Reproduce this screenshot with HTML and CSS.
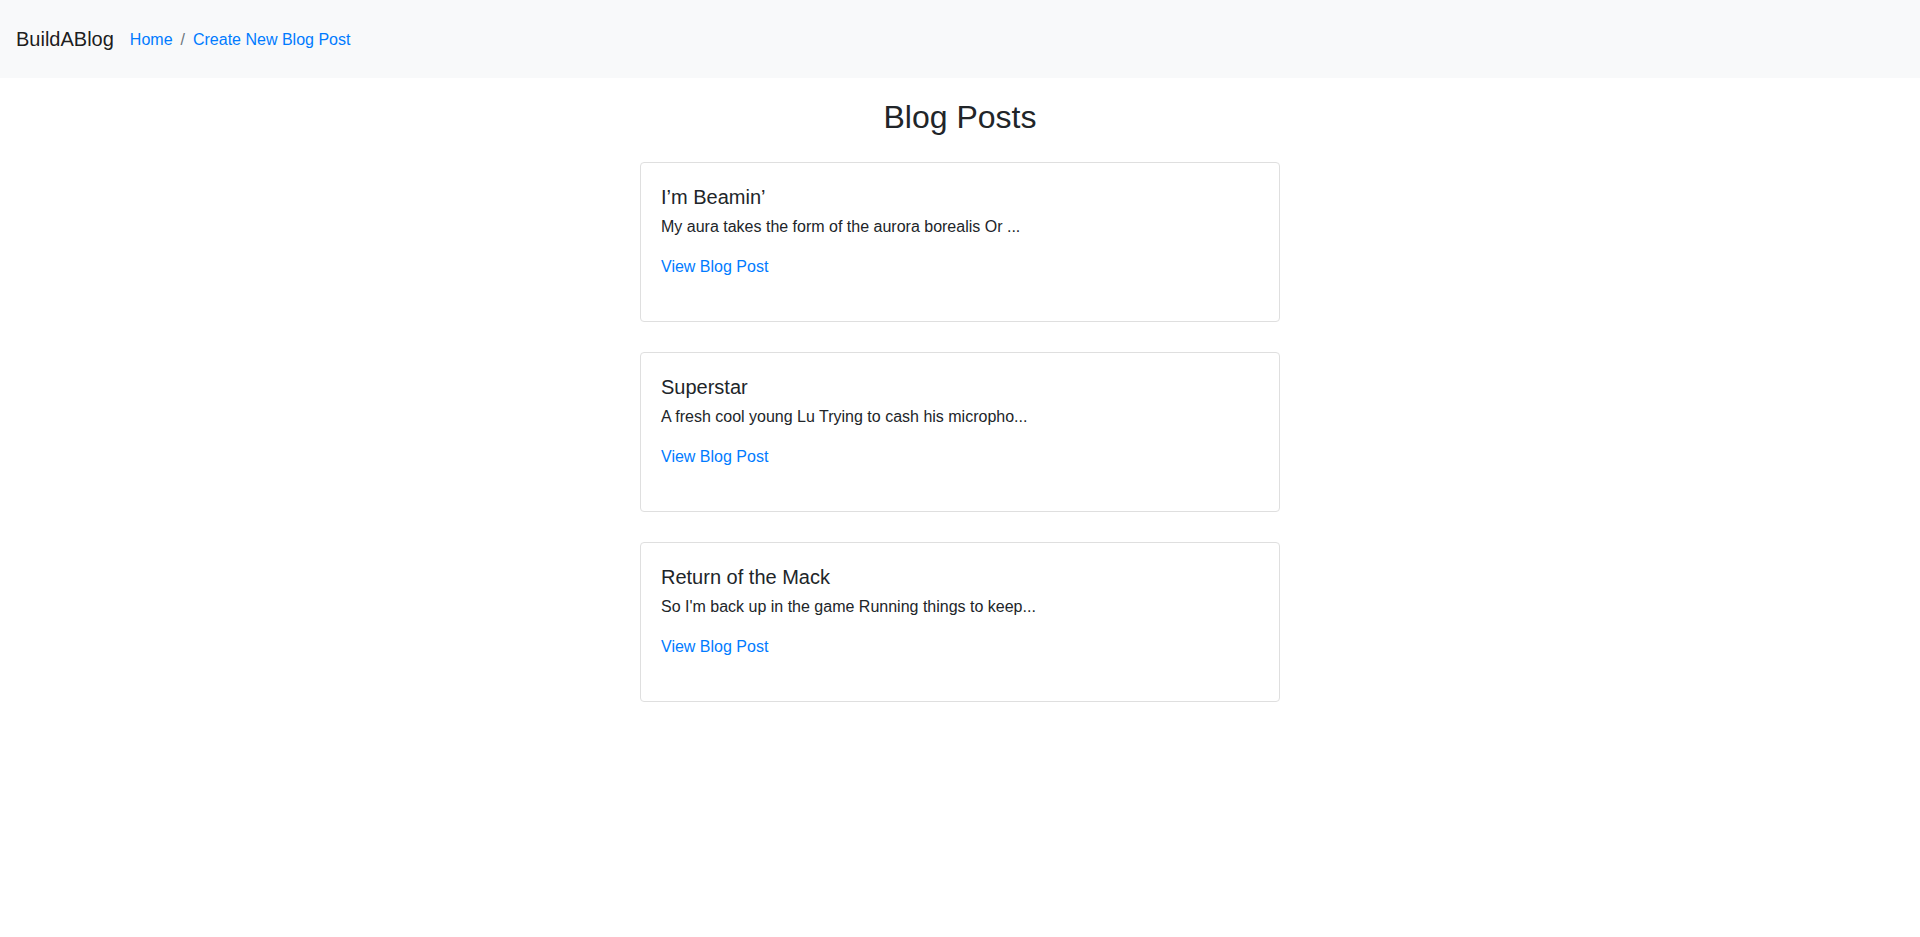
FILE: index.html
```html
<!DOCTYPE html>
<html lang="en">
<head>
<meta charset="utf-8">
<title>BuildABlog</title>
<link rel="stylesheet" href="styles.css">
</head>
<body>
<nav class="navbar">
  <a class="brand" href="#">BuildABlog</a>
  <ol class="crumbs">
    <li class="crumb"><a href="#">Home</a></li>
    <li class="crumb"><a href="#">Create New Blog Post</a></li>
  </ol>
</nav>
<main class="container">
  <h2 class="page-title">Blog Posts</h2>
  <div class="posts">
    <div class="card">
      <h5 class="card-title">I’m Beamin’</h5>
      <p class="card-text">My aura takes the form of the aurora borealis Or ...</p>
      <a class="card-link" href="#">View Blog Post</a>
    </div>
    <div class="card">
      <h5 class="card-title">Superstar</h5>
      <p class="card-text">A fresh cool young Lu Trying to cash his micropho...</p>
      <a class="card-link" href="#">View Blog Post</a>
    </div>
    <div class="card">
      <h5 class="card-title">Return of the Mack</h5>
      <p class="card-text">So I'm back up in the game Running things to keep...</p>
      <a class="card-link" href="#">View Blog Post</a>
    </div>
  </div>
</main>
</body>
</html>
```
FILE: styles.css
```css
* { box-sizing: border-box; }
html, body {
  margin: 0;
  padding: 0;
  background: #fff;
  color: #212529;
  font-family: "Liberation Sans", Arial, sans-serif;
  font-size: 16px;
  line-height: 24px;
}
a { color: #007bff; text-decoration: none; }

.navbar {
  height: 78px;
  background: #f8f9fa;
  display: flex;
  align-items: center;
  padding: 0 16px;
}
.brand {
  color: rgba(0,0,0,.9);
  font-size: 20px;
  line-height: 30px;
  margin-right: 16px;
}
.crumbs {
  display: flex;
  list-style: none;
  margin: 0;
  padding: 1px 0 0 0;
}
.crumb + .crumb::before {
  content: "/";
  color: #6c757d;
  padding: 0 8px;
}

.container {
  display: flex;
  flex-direction: column;
  align-items: center;
  padding-top: 20px;
}
.page-title {
  margin: 0 0 26px 0;
  font-size: 32px;
  font-weight: 400;
  line-height: 38px;
}
.posts {
  width: 640px;
  display: flex;
  flex-direction: column;
  gap: 30px;
}
.card {
  border: 1px solid #dfdfdf;
  border-radius: 4px;
  padding: 22px 20px 42px 20px;
  display: flex;
  flex-direction: column;
  align-items: flex-start;
  height: 160px;
}
.card-title {
  margin: 0 0 6px 0;
  font-size: 20px;
  font-weight: 400;
  line-height: 24px;
}
.card-text {
  margin: 0 0 16px 0;
}
.card-link {
  line-height: 24px;
}
```
